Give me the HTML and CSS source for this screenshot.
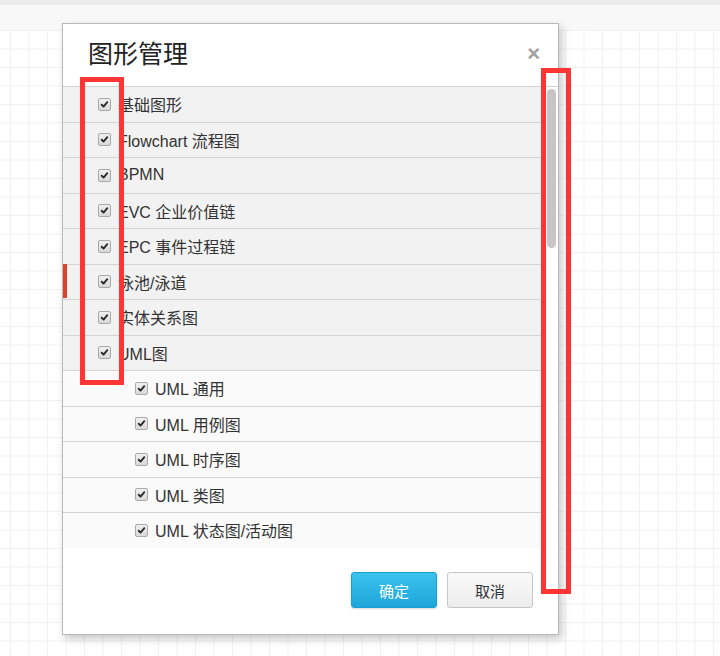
FILE: index.html
```html
<!DOCTYPE html>
<html lang="zh">
<head>
<meta charset="utf-8">
<title>图形管理</title>
<link rel="stylesheet" href="styles.css">
</head>
<body>
<div class="topbar"></div>
<div class="ruler"></div>
<div class="canvas"></div>

<div class="dialog">
  <div class="dialog-header">
    <h2 class="dialog-title">图形管理</h2>
    <span class="dialog-close">×</span>
  </div>
  <div class="dialog-body">
    <div class="list">
      <div class="row"><span class="cb"><svg viewBox="0 0 13 13"><path d="M3.2 6.8 L5.4 9 L9.8 3.8" /></svg></span>基础图形</div>
      <div class="row"><span class="cb"><svg viewBox="0 0 13 13"><path d="M3.2 6.8 L5.4 9 L9.8 3.8" /></svg></span>Flowchart 流程图</div>
      <div class="row"><span class="cb"><svg viewBox="0 0 13 13"><path d="M3.2 6.8 L5.4 9 L9.8 3.8" /></svg></span>BPMN</div>
      <div class="row"><span class="cb"><svg viewBox="0 0 13 13"><path d="M3.2 6.8 L5.4 9 L9.8 3.8" /></svg></span>EVC 企业价值链</div>
      <div class="row"><span class="cb"><svg viewBox="0 0 13 13"><path d="M3.2 6.8 L5.4 9 L9.8 3.8" /></svg></span>EPC 事件过程链</div>
      <div class="row"><span class="cb"><svg viewBox="0 0 13 13"><path d="M3.2 6.8 L5.4 9 L9.8 3.8" /></svg></span>泳池/泳道</div>
      <div class="row"><span class="cb"><svg viewBox="0 0 13 13"><path d="M3.2 6.8 L5.4 9 L9.8 3.8" /></svg></span>实体关系图</div>
      <div class="row"><span class="cb"><svg viewBox="0 0 13 13"><path d="M3.2 6.8 L5.4 9 L9.8 3.8" /></svg></span>UML图</div>
      <div class="row sub"><span class="cb"><svg viewBox="0 0 13 13"><path d="M3.2 6.8 L5.4 9 L9.8 3.8" /></svg></span>UML 通用</div>
      <div class="row sub"><span class="cb"><svg viewBox="0 0 13 13"><path d="M3.2 6.8 L5.4 9 L9.8 3.8" /></svg></span>UML 用例图</div>
      <div class="row sub"><span class="cb"><svg viewBox="0 0 13 13"><path d="M3.2 6.8 L5.4 9 L9.8 3.8" /></svg></span>UML 时序图</div>
      <div class="row sub"><span class="cb"><svg viewBox="0 0 13 13"><path d="M3.2 6.8 L5.4 9 L9.8 3.8" /></svg></span>UML 类图</div>
      <div class="row sub last"><span class="cb"><svg viewBox="0 0 13 13"><path d="M3.2 6.8 L5.4 9 L9.8 3.8" /></svg></span>UML 状态图/活动图</div>
    </div>
    <div class="scrollbar"><div class="thumb"></div></div>
  </div>
  <div class="dialog-footer">
    <button class="btn btn-primary">确定</button>
    <button class="btn btn-default">取消</button>
  </div>
  <div class="marker"></div>
</div>

<div class="annot annot-left"></div>
<div class="annot annot-right"></div>
</body>
</html>
```

FILE: styles.css
```css
html, body {
  margin: 0;
  padding: 0;
  width: 720px;
  height: 656px;
  overflow: hidden;
  font-family: "Liberation Sans", Arial, "Noto Sans CJK SC", sans-serif;
  background: #ffffff;
}

.topbar {
  height: 5px;
  background: #ebebeb;
}

.ruler {
  height: 25px;
  background: #f8f8f8;
}

.canvas {
  height: 626px;
  background-color: #ffffff;
  background-image:
    linear-gradient(to right, #f1f1f1 1px, transparent 1px),
    linear-gradient(to bottom, #f1f1f1 1px, transparent 1px);
  background-size: 18.5px 18.5px;
  background-position: 10px 0px;
}

.dialog {
  position: absolute;
  left: 62px;
  top: 23px;
  width: 497px;
  height: 612px;
  box-sizing: border-box;
  background: #ffffff;
  border: 1px solid #b9b9b9;
  box-shadow: 3px 4px 8px rgba(0, 0, 0, 0.22);
  display: flex;
  flex-direction: column;
}

.dialog-header {
  height: 62px;
  display: flex;
  align-items: flex-start;
  justify-content: space-between;
  padding: 0 18px 0 25px;
  box-sizing: border-box;
}

.dialog-title {
  margin: 15px 0 0 0;
  font-size: 25px;
  line-height: 30px;
  font-weight: normal;
  color: #222222;
}

.dialog-close {
  margin-top: 18px;
  font-size: 22px;
  line-height: 24px;
  font-weight: bold;
  color: #a0a0a0;
}

.dialog-body {
  display: flex;
  height: 461px;
  border-top: 1px solid #d2d2d2;
  overflow: hidden;
}

.list {
  flex: 1;
  display: flex;
  flex-direction: column;
}

.row {
  height: 34.5px;
  flex: none;
  border-bottom: 1px solid #d4d4d4;
  background: #f2f2f2;
  display: flex;
  align-items: center;
  padding-left: 35px;
  font-size: 16px;
  color: #333333;
  box-sizing: content-box;
}

.row.sub {
  background: #fafafa;
  padding-left: 72px;
}

.row.last {
  border-bottom: none;
}

.cb {
  width: 11px;
  height: 11px;
  border: 1px solid #a9a9a9;
  border-radius: 2px;
  background: linear-gradient(#f0f0f0, #d9d9d9);
  margin-right: 7px;
  display: inline-flex;
  flex: none;
}

.cb svg {
  width: 11px;
  height: 11px;
}

.cb path {
  fill: none;
  stroke: #2a2a2a;
  stroke-width: 2.2;
  stroke-linecap: round;
  stroke-linejoin: round;
}

.scrollbar {
  width: 16px;
  flex: none;
  background: #ffffff;
  border-left: 1px solid #e6e6e6;
  box-sizing: border-box;
  padding: 2px 0 0 4px;
}

.thumb {
  width: 9px;
  height: 159px;
  border-radius: 5px;
  background: #c6c6c6;
}

.dialog-footer {
  flex: 1;
  display: flex;
  justify-content: flex-end;
  align-items: flex-start;
  gap: 10px;
  padding: 24px 25px 0 0;
}

.btn {
  width: 86px;
  height: 36px;
  border-radius: 3px;
  font-family: "Liberation Sans", Arial, "Noto Sans CJK SC", sans-serif;
  font-size: 15px;
  cursor: pointer;
}

.btn-primary {
  border: 1px solid #1a9fd3;
  background: linear-gradient(#3ac3ec, #1ea6dc);
  color: #ffffff;
  box-shadow: 0 1px 2px rgba(0, 0, 0, 0.15);
}

.btn-default {
  border: 1px solid #c6c6c6;
  background: linear-gradient(#f9f9f9, #ededed);
  color: #333333;
}

.marker {
  position: absolute;
  left: 0px;
  top: 240px;
  width: 4px;
  height: 34px;
  background: #d8432d;
}

.annot {
  position: absolute;
  border: 5px solid #fd3535;
  box-sizing: border-box;
}

.annot-left {
  left: 80px;
  top: 77px;
  width: 44px;
  height: 308px;
}

.annot-right {
  left: 541px;
  top: 68px;
  width: 30px;
  height: 526px;
}
```
